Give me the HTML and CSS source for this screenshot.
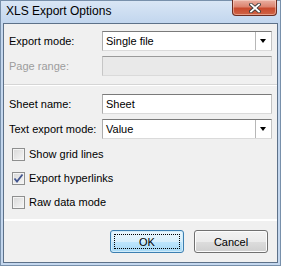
FILE: index.html
```html
<!DOCTYPE html>
<html lang="en">
<head>
    <meta charset="UTF-8">
    <title>XLS Export Options</title>
    <link rel="stylesheet" href="styles.css">
</head>
<body>
    <div class="window">
        <div class="titlebar">
            <span class="title">XLS Export Options</span>
            <div class="close-btn">
                <svg width="12" height="10" viewBox="0 0 12 10">
                    <path d="M2 1.5 L10 8.5 M10 1.5 L2 8.5" stroke="#3a3a3a" stroke-width="3.6" stroke-linecap="square"/>
                    <path d="M2 1.5 L10 8.5 M10 1.5 L2 8.5" stroke="#ffffff" stroke-width="1.8" stroke-linecap="square"/>
                </svg>
            </div>
        </div>

        <div class="client">
            <!-- Export mode / page range -->
            <div class="form-grid">
                <label class="field-label">Export mode:</label>
                <div class="combo">
                    <span class="combo-value">Single file</span>
                    <span class="combo-arrow"></span>
                </div>

                <label class="field-label disabled">Page range:</label>
                <div class="textbox disabled"></div>
            </div>

            <div class="separator"></div>

            <!-- Sheet settings -->
            <div class="form-grid">
                <label class="field-label">Sheet name:</label>
                <div class="textbox">Sheet</div>

                <label class="field-label">Text export mode:</label>
                <div class="combo">
                    <span class="combo-value">Value</span>
                    <span class="combo-arrow"></span>
                </div>
            </div>

            <div class="checks">
                <div class="check-row">
                    <span class="checkbox"></span>
                    <span>Show grid lines</span>
                </div>
                <div class="check-row">
                    <span class="checkbox checked">
                        <svg width="11" height="11" viewBox="0 0 11 11">
                            <path d="M1.5 5.5 L4 8.5 L9.5 1.5" fill="none" stroke="#42558f" stroke-width="1.8"/>
                        </svg>
                    </span>
                    <span>Export hyperlinks</span>
                </div>
                <div class="check-row">
                    <span class="checkbox"></span>
                    <span>Raw data mode</span>
                </div>
            </div>

            <div class="separator bottom"></div>

            <div class="buttons">
                <button class="btn default"><span class="focus">OK</span></button>
                <button class="btn">Cancel</button>
            </div>
        </div>
    </div>
</body>
</html>
```

FILE: styles.css
```css
* {
    box-sizing: border-box;
    margin: 0;
    padding: 0;
}

body {
    font-family: 'Liberation Sans', Arial, sans-serif;
    font-size: 11px;
    color: #000;
    background: #fff;
}

.window {
    width: 281px;
    height: 266px;
    border: 1px solid #7890ab;
    background: #c4d7ee;
    padding: 0 2px 2px 2px;
    display: flex;
    flex-direction: column;
}

.titlebar {
    height: 22px;
    display: flex;
    justify-content: space-between;
    align-items: flex-start;
    background: linear-gradient(#d9e6f5, #c2d6ee);
    margin: 0 -2px;
    padding: 0 3px 0 4px;
}

.title {
    font-size: 12px;
    line-height: 20px;
    padding-left: 1px;
}

.close-btn {
    width: 45px;
    height: 16px;
    margin-top: -1px;
    border: 1px solid #6b2d22;
    border-top: none;
    border-radius: 0 0 4px 4px;
    background: linear-gradient(#eab0a2, #dc8470 45%, #c94a2e 55%, #cf6446);
    box-shadow: inset 0 0 0 1px rgba(255, 230, 220, 0.45);
    display: flex;
    justify-content: center;
    align-items: center;
}

.client {
    flex: 1;
    border: 1px solid #5d7189;
    background: #f0f0f0;
    padding: 7px 5px 0 5px;
    display: flex;
    flex-direction: column;
}

.form-grid {
    display: grid;
    grid-template-columns: 93px 1fr;
    row-gap: 5px;
    align-items: center;
}

.field-label {
    line-height: 20px;
}

.field-label.disabled {
    color: #9d9d9d;
}

.combo,
.textbox {
    height: 20px;
    background: #fff;
    border: 1px solid;
    border-color: #7a7a7a #c3c3c3 #dadada #acacac;
    display: flex;
    align-items: center;
}

.textbox {
    padding-left: 3px;
}

.textbox.disabled {
    background: #e9e9e9;
    border-color: #9a9a9a #d2d2d2 #dadada #c6c6c6;
}

.combo-value {
    flex: 1;
    padding-left: 3px;
}

.combo-arrow {
    width: 16px;
    height: 100%;
    border-left: 1px solid #b7b7b7;
    position: relative;
}

.combo-arrow::after {
    content: '';
    position: absolute;
    left: 4px;
    top: 7px;
    border-left: 3.5px solid transparent;
    border-right: 3.5px solid transparent;
    border-top: 4px solid #000;
}

.separator {
    height: 2px;
    margin: 8px -5px 8px -5px;
    border-top: 1px solid #d5d5d5;
    border-bottom: 1px solid #fff;
}

.separator.bottom {
    margin: 5px -5px 10px -5px;
    border-top: none;
    background: linear-gradient(to right, #f0f0f0 2%, #a8a8a8 12%, #a0a0a0);
    height: 1px;
    box-shadow: 0 1px 0 #fff;
}

.checks {
    display: flex;
    flex-direction: column;
    margin-top: 3px;
    padding-left: 3px;
}

.check-row {
    height: 24px;
    display: flex;
    align-items: center;
    gap: 4px;
}

.checkbox {
    width: 13px;
    height: 13px;
    border: 1px solid #8e8f8f;
    background: linear-gradient(135deg, #d8d8d8, #f6f6f6);
    box-shadow: inset 0 0 0 1px #f4f4f4;
    display: flex;
    align-items: center;
    justify-content: center;
}

.buttons {
    display: flex;
    justify-content: flex-end;
    gap: 10px;
    padding-right: 4px;
}

.btn {
    width: 74px;
    height: 23px;
    border: 1px solid #707070;
    border-radius: 3px;
    background: linear-gradient(#f2f2f2, #ebebeb 50%, #dddddd 51%, #cfcfcf);
    box-shadow: inset 0 0 0 1px #fcfcfc;
    font-family: inherit;
    font-size: 11px;
    color: #000;
    display: flex;
    align-items: center;
    justify-content: center;
}

.btn.default {
    border-color: #3c7fb1;
    background: linear-gradient(#e9f6fd, #d8effb 50%, #bee6fd 51%, #a7d9f5);
    box-shadow: inset 0 0 0 1px #d0ecfa;
    padding: 3px;
}

.focus {
    flex: 1;
    align-self: stretch;
    border: 1px dotted #000;
    display: flex;
    align-items: center;
    justify-content: center;
}
```
